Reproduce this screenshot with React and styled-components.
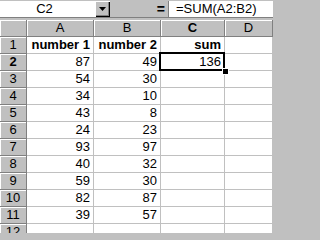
import React from 'react';
import styled, { createGlobalStyle, css } from 'styled-components';

const GlobalStyle = createGlobalStyle`
  html, body {
    margin: 0;
    padding: 0;
    background: #c0c0c0;
    font-family: "Liberation Sans", Arial, sans-serif;
    font-size: 13px;
    color: #000;
  }
`;

const COLUMNS = ['A', 'B', 'C', 'D'];
const DATA = [
  [87, 49],
  [54, 30],
  [34, 10],
  [43, 8],
  [24, 23],
  [93, 97],
  [40, 32],
  [59, 30],
  [82, 87],
  [39, 57],
];

const Sheet = styled.div`
  width: 273px;
  height: 233px;
  overflow: hidden;
  background: #c0c0c0;
  display: flex;
  flex-direction: column;
`;

const FormulaBar = styled.div`
  display: flex;
  height: 16px;
  margin-top: 1px;
  border-bottom: 1px solid #808080;
  margin-bottom: 2px;
`;

const NameBox = styled.div`
  width: 95px;
  background: #fff;
  display: flex;
  align-items: center;
  justify-content: center;
  line-height: 16px;
  padding-right: 6px;
  box-sizing: border-box;
`;

const DropButton = styled.div`
  width: 15px;
  background: #c0c0c0;
  box-shadow: inset 1px 1px 0 #fff, inset -1px -1px 0 #000, inset -2px -2px 0 #808080;
  display: flex;
  align-items: center;
  justify-content: center;
`;

const EqualsPane = styled.div`
  width: 55px;
  display: flex;
  align-items: center;
  justify-content: flex-end;
  padding-right: 3px;
  font-weight: bold;
  font-size: 14px;
`;

const FormulaInput = styled.div`
  flex: 1;
  background: #fff;
  border-left: 1px solid #808080;
  padding-left: 7px;
  line-height: 16px;
  white-space: nowrap;
`;

const Grid = styled.div`
  display: grid;
  grid-template-columns: 27px 67px 67px 64px 48px;
  grid-auto-rows: 17px;
  background: #fff;
`;

const Header = styled.div`
  background: #c0c0c0;
  box-sizing: border-box;
  border-right: 1px solid #808080;
  border-bottom: 1px solid #808080;
  box-shadow: inset 1px 1px 0 #fff;
  display: flex;
  align-items: center;
  justify-content: center;
  line-height: 16px;
  ${({ $active }) =>
    $active &&
    css`
      font-weight: bold;
    `}
`;

const Cell = styled.div`
  box-sizing: border-box;
  border-right: 1px solid #c0c0c0;
  border-bottom: 1px solid #c0c0c0;
  padding-right: 3px;
  text-align: right;
  line-height: 16px;
  white-space: nowrap;
  font-weight: ${({ $bold }) => ($bold ? 'bold' : 'normal')};
  position: relative;
  ${({ $selected }) =>
    $selected &&
    css`
      z-index: 1;
      &::before {
        content: '';
        position: absolute;
        top: -2px;
        left: -2px;
        right: -1px;
        bottom: -1px;
        border: 2px solid #000;
      }
      &::after {
        content: '';
        position: absolute;
        right: -4px;
        bottom: -4px;
        width: 5px;
        height: 5px;
        background: #000;
        box-shadow: 0 0 0 1px #fff;
      }
    `}
`;

const Triangle = () => (
  <svg width="7" height="4" viewBox="0 0 7 4">
    <path d="M0 0h7L3.5 4z" fill="#000" />
  </svg>
);

export default function App() {
  return (
    <>
      <GlobalStyle />
      <Sheet>
        <FormulaBar>
          <NameBox>C2</NameBox>
          <DropButton>
            <Triangle />
          </DropButton>
          <EqualsPane>=</EqualsPane>
          <FormulaInput>=SUM(A2:B2)</FormulaInput>
        </FormulaBar>
        <Grid>
          <Header />
          {COLUMNS.map((c) => (
            <Header key={c} $active={c === 'C'}>
              {c}
            </Header>
          ))}

          <Header>1</Header>
          <Cell $bold>number 1</Cell>
          <Cell $bold>number 2</Cell>
          <Cell $bold>sum</Cell>
          <Cell />

          {DATA.map(([a, b], i) => {
            const row = i + 2;
            return (
              <React.Fragment key={row}>
                <Header $active={row === 2}>{row}</Header>
                <Cell>{a}</Cell>
                <Cell>{b}</Cell>
                <Cell $selected={row === 2}>{row === 2 ? a + b : ''}</Cell>
                <Cell />
              </React.Fragment>
            );
          })}

          <Header>12</Header>
          <Cell />
          <Cell />
          <Cell />
          <Cell />
        </Grid>
      </Sheet>
    </>
  );
}
